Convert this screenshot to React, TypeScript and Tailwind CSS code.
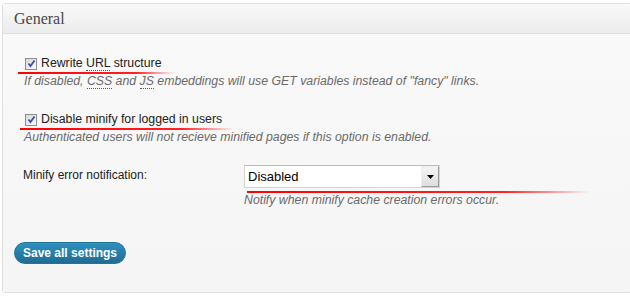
import React from "react";

const Check: React.FC = () => (
  <span className="w-[12px] h-[12px] shrink-0 border border-[#8e8f8f] bg-gradient-to-br from-[#d6d8dc] to-[#fbfbfb] flex items-center justify-center">
    <svg width="9" height="9" viewBox="0 0 9 9">
      <path d="M1.5 4.5 L3.5 7 L7.5 1.5" fill="none" stroke="#3d4fa0" strokeWidth="1.8" />
    </svg>
  </span>
);

const Dotted: React.FC<{ children: React.ReactNode }> = ({ children }) => (
  <span className="border-b border-dotted border-[#555]">{children}</span>
);

const RedLine: React.FC<{ className: string }> = ({ className }) => (
  <div className={`h-[2px] bg-[linear-gradient(to_right,#f00_0%,#f22_75%,rgba(255,0,0,0)_100%)] ${className}`} />
);

export default function App() {
  return (
    <div className="w-[630px] h-[296px] bg-white pl-[2px] pt-[3px] font-['Liberation_Sans',Arial,sans-serif] overflow-hidden">
      <div className="w-[630px] h-[290px] border border-[#dfdfdf] rounded-[3px] bg-[#f6f6f6] flex flex-col">
        {/* Header */}
        <div className="h-[30px] shrink-0 flex items-center px-[11px] border-b border-[#dfdfdf] bg-gradient-to-b from-[#f9f9f9] to-[#ececec]">
          <h3 className="font-['Liberation_Serif',Georgia,serif] text-[16px] text-[#464646]">General</h3>
        </div>

        <div className="px-[11px] pt-[21px] bg-gradient-to-b from-[#f9f9f9] to-[#f5f5f5] flex-1">
          {/* Row 1 */}
          <div className="pl-[11px]">
            <label className="h-[17px] flex items-center gap-[4px] text-[12.3px] text-[#222]">
              <Check />
              <span>
                Rewrite <Dotted>URL</Dotted> structure
              </span>
            </label>
            <RedLine className="-ml-[7px] w-[157px]" />
            <p className="text-[12.3px] leading-[15px] italic text-[#6a6a6a] -ml-[1px]">
              If disabled, <Dotted>CSS</Dotted> and <Dotted>JS</Dotted> embeddings will use GET variables instead of "fancy" links.
            </p>
          </div>

          {/* Row 2 */}
          <div className="pl-[11px] mt-[22px]">
            <label className="h-[17px] flex items-center gap-[4px] text-[12.3px] text-[#222]">
              <Check />
              <span>Disable minify for logged in users</span>
            </label>
            <RedLine className="-ml-[5px] w-[215px]" />
            <p className="text-[12.3px] leading-[15px] italic text-[#6a6a6a] -ml-[1px]">
              Authenticated users will not recieve minified pages if this option is enabled.
            </p>
          </div>

          {/* Row 3 */}
          <div className="pl-[9px] mt-[20px] flex">
            <div className="w-[221px] pt-[2px] text-[12px] leading-[16px] text-[#222]">Minify error notification:</div>
            <div>
              <div className="w-[196px] h-[23px] flex bg-white border border-[#d4d4d4] border-t-[#bdbdbd]">
                <span className="flex-1 flex items-center pl-[3px] text-[13px] text-black">Disabled</span>
                <span className="w-[18px] h-[21px] bg-gradient-to-b from-[#f4f4f4] to-[#dedede] border border-[#9a9a9a] border-t-[#eee] border-l-[#eee] flex items-center justify-center">
                  <svg width="7" height="4" viewBox="0 0 7 4">
                    <path d="M0 0 H7 L3.5 4 Z" fill="#000" />
                  </svg>
                </span>
              </div>
              <RedLine className="mt-[3px] ml-[3px] w-[343px]" />
              <p className="text-[12.3px] leading-[15px] italic text-[#6a6a6a]">
                Notify when minify cache creation errors occur.
              </p>
            </div>
          </div>

          {/* Save */}
          <button className="mt-[34px] h-[22px] px-[8px] rounded-full bg-gradient-to-b from-[#2e91c0] to-[#1f6c93] border border-[#21759b] text-white text-[12px] font-bold leading-none">
            Save all settings
          </button>
        </div>
      </div>
    </div>
  );
}
